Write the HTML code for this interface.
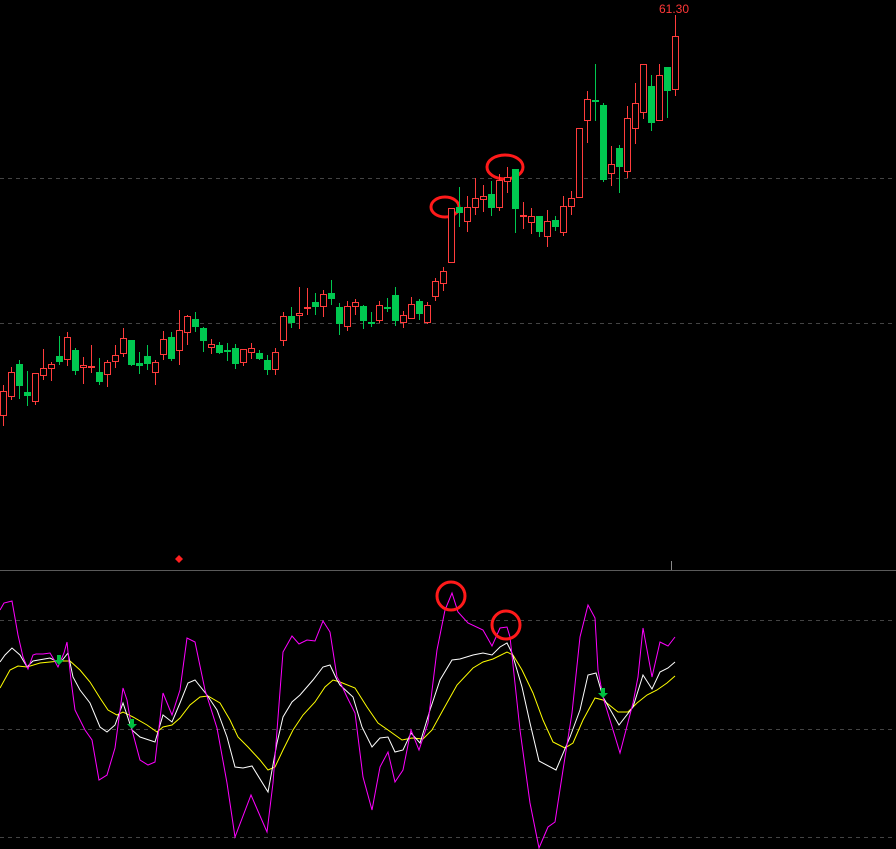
<!DOCTYPE html>
<html><head><meta charset="utf-8"><style>
html,body{margin:0;padding:0;background:#000;width:896px;height:849px;overflow:hidden}
svg{display:block}
</style></head><body>
<svg width="896" height="849" viewBox="0 0 896 849" xmlns="http://www.w3.org/2000/svg">
<rect width="896" height="849" fill="#000"/>
<g stroke="#444" stroke-width="1" stroke-dasharray="4 4">
<line x1="0" y1="178.5" x2="896" y2="178.5"/>
<line x1="0" y1="323.5" x2="896" y2="323.5"/>
<line x1="0" y1="620.5" x2="896" y2="620.5"/>
<line x1="0" y1="729.5" x2="896" y2="729.5"/>
<line x1="0" y1="837.5" x2="896" y2="837.5"/>
</g>
<line x1="0" y1="570.5" x2="896" y2="570.5" stroke="#5a5a5a"/>
<line x1="671.5" y1="561" x2="671.5" y2="570" stroke="#888"/>
<polygon points="179,555 183,559 179,563 175,559" fill="#ff2020"/>
<text x="659" y="13" font-family="Liberation Sans, sans-serif" font-size="12" fill="#ff3838">61.30</text>
<g id="c"></g>
<g fill="none" stroke-width="1">
<polyline stroke="#ffff00" points="0,688 10,670 18,666 27,667 40,663 60,661 70,661 80,670 90,682 100,698 108,710 117,715 123,712 133,717 147,725 157,732 163,727 172,725 180,718 190,705 200,697 208,696 220,703 230,720 238,737 248,747 260,760 268,770 275,767 283,750 293,730 303,715 315,702 325,687 333,680 340,682 355,688 367,707 378,723 388,730 402,740 412,738 423,739 432,730 443,710 457,685 473,668 483,662 493,659 507,652 513,655 522,670 533,693 543,720 553,742 565,748 573,743 583,720 595,698 603,700 618,712 628,712 637,703 647,695 657,690 667,683 675,676"/>
<polyline stroke="#ffffff" points="0,662 5,655 12,648 20,655 27,667 33,661 50,658 60,663 68,653 73,677 80,690 90,703 100,727 107,732 115,725 123,703 132,730 140,737 155,742 163,715 172,722 180,703 188,683 195,680 207,695 217,710 227,737 235,767 243,768 252,766 268,792 277,743 283,717 292,702 300,695 313,680 323,667 330,665 337,680 340,685 353,697 362,727 372,747 380,738 388,737 395,752 403,750 411,733 420,743 430,710 440,680 452,660 460,659 473,655 483,653 492,655 500,647 507,643 512,653 522,687 530,723 539,761 556,770 570,737 580,710 588,675 596,673 603,697 619,725 633,707 643,675 652,689 660,672 668,668 675,662"/>
<polyline stroke="#ff00ff" points="0,610 4,603 12,601 18,635 23,657 28,669 33,655 36,654 43,654 50,653 53,658 58,667 64,653 67,642 68,652 71,680 75,710 85,730 92,740 99,780 107,775 115,748 123,688 127,700 132,730 140,760 148,765 155,762 163,693 172,715 180,690 187,638 195,642 205,690 217,728 227,783 235,837 251,795 267,832 273,783 283,652 292,636 299,644 307,640 315,641 323,621 330,632 337,677 340,682 347,697 355,713 363,777 372,810 380,767 388,752 395,782 403,770 411,730 419,750 428,723 437,650 445,610 452,593 458,612 468,623 483,630 492,646 500,628 507,627 510,637 520,730 530,803 539,848 548,827 555,822 563,770 572,713 580,637 588,605 595,618 598,670 603,697 620,753 633,703 638,677 643,628 652,677 660,642 668,646 675,637"/>
</g>
<g fill="#00c040">
<polygon points="57,655 61,655 61,660 64,660 59,665 54,660 57,660"/>
<polygon points="130,719 134,719 134,724 137,724 132,729 127,724 130,724"/>
<polygon points="601,688 605,688 605,693 608,693 603,698 598,693 601,693"/>
</g>
<g fill="none" stroke="#ff1a1a" stroke-width="3">
<ellipse cx="445" cy="207" rx="14" ry="10"/>
<ellipse cx="505" cy="167" rx="18" ry="12"/>
<circle cx="451" cy="596" r="14"/>
<circle cx="506" cy="625" r="14"/>
</g>
<g id="k">
</g>
</svg>
<script>
var d=[
"R 391 416 385 426","R 372 397 367 400","G 364 386 360 399","G 392 396 371 406","R 373 402 373 405",
"R 368 376 349 380","R 364 369 362 381","G 356 362 336 365","R 337 360 332 366","G 350 371 348 375",
"R 365 368 357 384","R 366 368 345 373","G 372 382 358 385","R 362 375 360 387","R 355 362 345 368",
"R 338 354 328 357","G 340 365 340 366","G 363 366 352 374","G 356 364 345 370","R 362 373 360 385",
"R 339 355 331 360","G 337 359 332 361","R 330 351 310 365","R 316 333 315 345","G 319 327 312 332",
"G 328 341 327 352","R 344 348 339 354","G 345 353 342 354","G 350 352 343 361","G 348 364 344 369",
"R 349 363 349 366","R 348 353 343 359","G 353 359 350 360","G 360 370 355 375","R 352 370 348 375",
"R 316 341 312 346","G 316 323 307 328","R 313 316 287 329","R 307 309 288 315","G 302 307 293 315",
"R 294 307 290 317","G 293 299 280 305","G 307 324 303 335","R 306 327 301 331","R 302 307 299 315",
"G 306 321 305 329","G 322 324 312 327","R 305 321 301 323","G 307 308 298 312","G 295 321 287 326",
"R 315 323 311 328","R 304 319 297 319","G 301 314 299 320","R 305 323 302 324","R 281 297 278 301",
"R 271 284 267 291","R 208 263 208 263","G 207 213 187 227","R 207 222 196 232","R 198 208 178 215",
"R 196 200 185 212","G 194 208 181 216","R 180 208 174 211","R 177 182 167 193","G 169 209 169 233",
"R 215 217 202 229","R 216 223 208 234","G 216 232 216 237","R 221 237 210 247","G 220 227 216 231",
"R 206 233 196 236","R 198 207 191 215","R 128 198 128 198","R 99 121 91 143","G 100 102 64 121",
"G 105 180 103 182","R 164 174 146 186","G 148 167 145 193","R 118 172 106 178","R 103 129 83 144",
"R 64 113 64 119","G 86 123 75 131","R 75 121 64 121","G 67 91 67 118","R 36 90 15 96"];
var s="";
d.forEach(function(r,i){var p=r.split(" ");var t=+p[1],b=+p[2],h=+p[3],l=+p[4];var cx=3.5+8*i;
var col=p[0]=="R"?"#ff3c3c":"#00c850";
s+='<line x1="'+cx+'" y1="'+h+'" x2="'+cx+'" y2="'+l+'" stroke="'+col+'"/>';
if(p[0]=="R"){var hh=Math.max(b-t-1,1);s+='<rect x="'+(cx-3)+'" y="'+(t+0.5)+'" width="6" height="'+hh+'" fill="#000" stroke="'+col+'"/>';}
else{s+='<rect x="'+(cx-3.5)+'" y="'+t+'" width="7" height="'+Math.max(b-t,2)+'" fill="'+col+'"/>';}
});
document.getElementById("k").innerHTML=s;
</script>
</body></html>
